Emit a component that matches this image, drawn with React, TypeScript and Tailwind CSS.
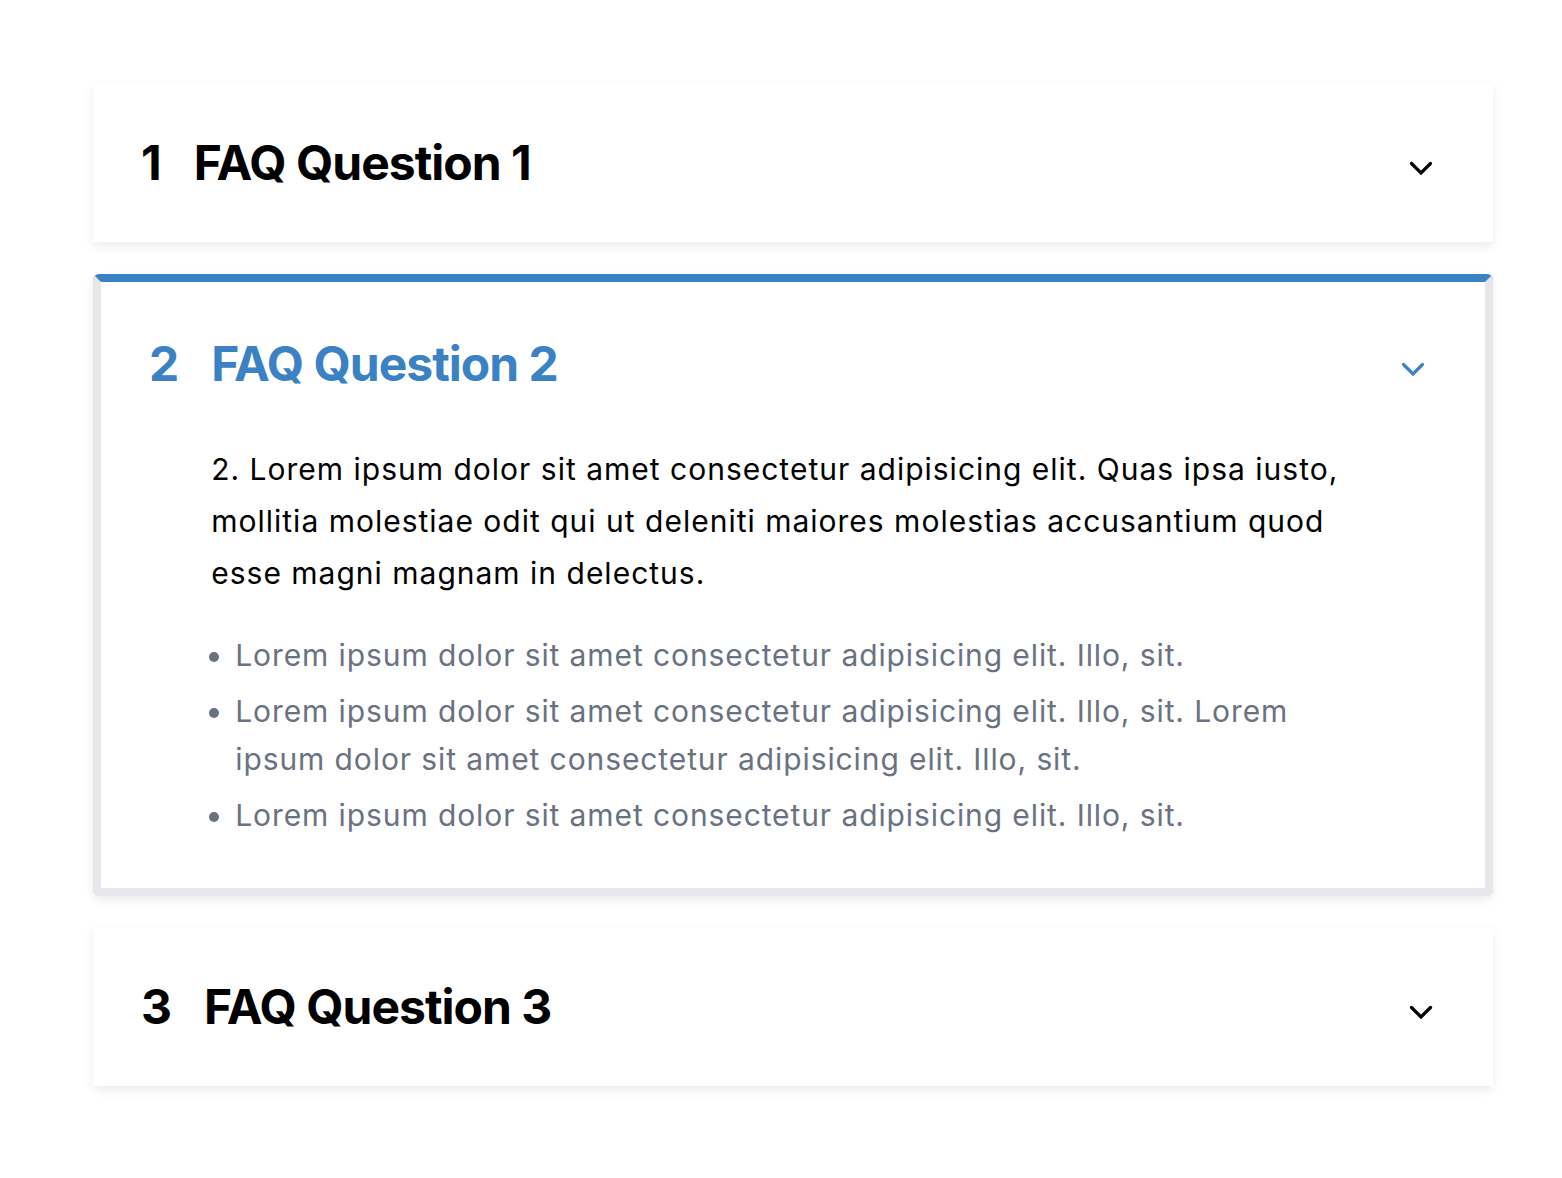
import { useState } from "react";

interface Faq {
  id: number;
  question: string;
  answer: string;
  points: string[];
}

const faqs: Faq[] = [
  {
    id: 1,
    question: "FAQ Question 1",
    answer:
      "1. Lorem ipsum dolor sit amet consectetur adipisicing elit. Quas ipsa iusto, mollitia molestiae odit qui ut deleniti maiores molestias accusantium quod esse magni magnam in delectus.",
    points: [],
  },
  {
    id: 2,
    question: "FAQ Question 2",
    answer:
      "2. Lorem ipsum dolor sit amet consectetur adipisicing elit. Quas ipsa iusto, mollitia molestiae odit qui ut deleniti maiores molestias accusantium quod esse magni magnam in delectus.",
    points: [
      "Lorem ipsum dolor sit amet consectetur adipisicing elit. Illo, sit.",
      "Lorem ipsum dolor sit amet consectetur adipisicing elit. Illo, sit. Lorem ipsum dolor sit amet consectetur adipisicing elit. Illo, sit.",
      "Lorem ipsum dolor sit amet consectetur adipisicing elit. Illo, sit.",
    ],
  },
  {
    id: 3,
    question: "FAQ Question 3",
    answer:
      "3. Lorem ipsum dolor sit amet consectetur adipisicing elit. Quas ipsa iusto, mollitia molestiae odit qui ut deleniti maiores molestias accusantium quod esse magni magnam in delectus.",
    points: [],
  },
];

const Chevron = () => (
  <svg width="24" height="16" viewBox="0 0 24 16" fill="none">
    <path
      d="M2.5 3.5 L12 13 L21.5 3.5"
      stroke="currentColor"
      strokeWidth="3.2"
      strokeLinecap="round"
      strokeLinejoin="miter"
    />
  </svg>
);

const Item = ({
  faq,
  open,
  onToggle,
}: {
  faq: Faq;
  open: boolean;
  onToggle: () => void;
}) => {
  return (
    <div
      onClick={onToggle}
      className={
        open
          ? "grid cursor-pointer grid-cols-[auto_1fr_48px] items-center gap-x-8 rounded-md border-8 border-gray-200 border-t-[#3b82c4] bg-white px-12 pt-[51px] pb-[49px] shadow-[0_4px_10px_rgba(0,0,0,0.08)]"
          : "grid cursor-pointer grid-cols-[auto_1fr_48px] items-center gap-x-8 bg-white px-12 py-12 shadow-[0_4px_10px_rgba(0,0,0,0.08)]"
      }
    >
      <p
        className={
          open
            ? "text-5xl font-bold leading-[62px] text-[#3b82c4]"
            : "text-5xl font-bold leading-[62px] text-black"
        }
      >
        {faq.id}
      </p>
      <p
        className={
          open
            ? "text-5xl font-bold leading-[62px] tracking-[-1px] text-[#3b82c4]"
            : "text-5xl font-bold leading-[62px] tracking-[-1px] text-black"
        }
      >
        {faq.question}
      </p>
      <div
        className={
          open
            ? "mt-[10px] flex justify-center text-[#3b82c4]"
            : "mt-[10px] flex justify-center text-black"
        }
      >
        <Chevron />
      </div>

      {open && (
        <div className="col-start-2 pt-12">
          <p className="text-[30px] leading-[52px] tracking-[1px] text-black">
            {faq.answer}
          </p>
          {faq.points.length > 0 && (
            <ul className="mt-8 list-disc space-y-2 pl-6 text-[30px] leading-[48px] tracking-[0.9px] text-gray-500">
              {faq.points.map((pt, i) => (
                <li key={i}>{pt}</li>
              ))}
            </ul>
          )}
        </div>
      )}
    </div>
  );
};

const App = () => {
  const [openId, setOpenId] = useState<number | null>(2);

  return (
    <div className="min-h-screen bg-white font-['Inter','Noto_Sans',sans-serif]">
      <div className="ml-[93px] flex w-[1400px] flex-col gap-8 pt-[84px]">
        {faqs.map((faq) => (
          <Item
            key={faq.id}
            faq={faq}
            open={openId === faq.id}
            onToggle={() => setOpenId(openId === faq.id ? null : faq.id)}
          />
        ))}
      </div>
    </div>
  );
};

export default App;
